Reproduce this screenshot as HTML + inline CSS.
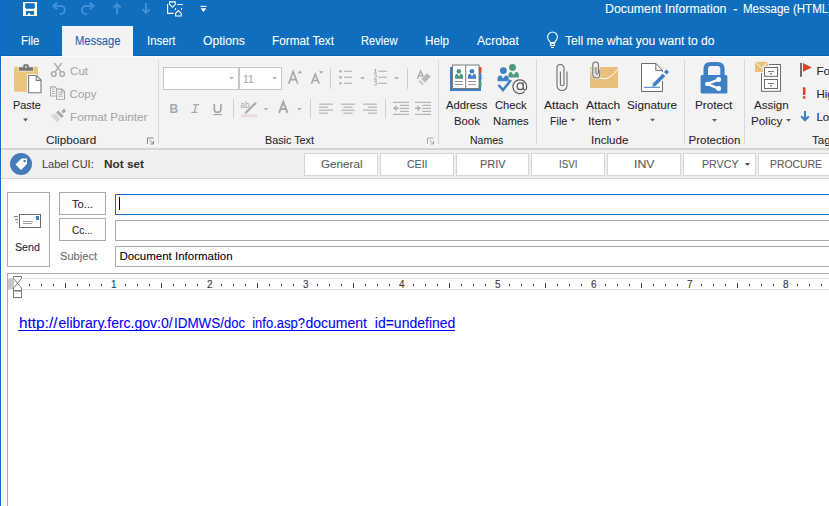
<!DOCTYPE html>
<html><head><meta charset="utf-8"><style>
html,body{margin:0;padding:0;width:829px;height:506px;overflow:hidden;background:#fff}
.t{position:absolute;font-family:"Liberation Sans",sans-serif;white-space:pre;line-height:20px;transform-origin:0 50%;-webkit-text-stroke:0.08px currentColor}
.u{text-decoration:underline}
svg{position:absolute;left:0;top:0}
</style></head><body>
<svg width="829" height="506" viewBox="0 0 829 506" shape-rendering="geometricPrecision">
<!-- title + tabs -->
<rect x="0" y="0" width="829" height="56" fill="#106ebe"/>
<rect x="0" y="55" width="829" height="1" fill="#0d62ad"/>
<rect x="62" y="26" width="71" height="30" fill="#f3f3f3"/>
<!-- ribbon -->
<rect x="1" y="56" width="828" height="92" fill="#f3f3f3"/>
<rect x="1" y="56" width="828" height="1" fill="#fbfbfb"/>
<rect x="1" y="56" width="1" height="92" fill="#fbfbfb"/>
<rect x="0" y="148" width="829" height="2" fill="#d4d4d4"/>
<!-- label bar -->
<rect x="1" y="150" width="828" height="28" fill="#f0f0f0"/>
<rect x="0" y="178" width="829" height="1" fill="#dadada"/>
<!-- left border -->
<rect x="0" y="0" width="1" height="506" fill="#0a6fcc"/>

<!-- QAT: save -->
<rect x="23" y="2" width="14" height="14" fill="#ffffff"/>
<path d="M25.2,3.2 H34.8 V7.8 L33.9,8.7 H26.1 L25.2,7.8Z" fill="#106ebe"/>
<path d="M26,11 H34 V14.8 H30.1 V13.3 H28 V14.8 H26Z" fill="#106ebe"/>
<!-- undo / redo -->
<g fill="none" stroke="#3f8fd9" stroke-width="2">
<path d="M53,5.9 H60.8 A4,4 0 0 1 60.8,13.9 H59.8"/>
<path d="M57.3,2.6 L53.2,5.9 L57.3,9.3"/>
<g transform="translate(146.8,0) scale(-1,1)">
<path d="M53,5.9 H60.8 A4,4 0 0 1 60.8,13.9 H59.8"/>
<path d="M57.3,2.6 L53.2,5.9 L57.3,9.3"/>
</g>
<path d="M117.1,4 V13.9 M113.5,7.6 L117.1,4 L120.7,7.6"/>
<path d="M146,2.9 V12.8 M142.4,9.2 L146,12.8 L149.6,9.2"/>
</g>
<!-- shape tool icon -->
<g fill="none" stroke="#ffffff" stroke-width="1.1">
<path d="M167.6,4 V13.4 H173.7"/>
<path d="M169.6,1.9 H175.3 V4.3 L172.5,7.3 L169.6,4.3Z"/>
<path d="M177.2,4.5 H182.8"/>
<path d="M175.6,16 V13.3 L178.4,10.5 L181.2,13.3 V16Z"/>
</g>
<g fill="#ffffff"><rect x="175.1" y="8" width="1" height="2"/><rect x="181" y="8" width="1" height="2"/></g>
<!-- customize -->
<rect x="200.6" y="5.8" width="5.8" height="1.2" fill="#fff"/>
<path d="M200.6,8.3 H206.4 L203.5,12 Z" fill="#fff"/>
<!-- tell me bulb -->
<g fill="none" stroke="#ffffff" stroke-width="1.1">
<path d="M550.4,42.6 L548.2,39.2 A4.9,4.9 0 1 1 556.8,39.2 L554.6,42.6 Z"/>
<rect x="550.6" y="43.3" width="3.8" height="2.2"/>
</g>
<rect x="551" y="47" width="3" height="1" fill="#ffffff"/>
<!-- group separators -->
<g fill="#d8d8d8">
<rect x="158" y="60" width="1" height="84"/>
<rect x="438" y="60" width="1" height="84"/>
<rect x="536" y="60" width="1" height="84"/>
<rect x="684" y="60" width="1" height="84"/>
<rect x="744" y="60" width="1" height="84"/>
</g>
<!-- Paste icon -->
<rect x="14" y="66.8" width="24" height="25" rx="1.5" fill="#eac57d"/>
<path d="M18.5,66.5 h15 v5 h-15z" fill="#f3f3f3" opacity="0.9"/>
<path d="M19,67.2 H23.2 V65.8 A1.5,1.5 0 0 1 24.7,64.3 H27.3 A1.5,1.5 0 0 1 28.8,65.8 V67.2 H33 V70.8 H19 Z" fill="#767676"/>
<circle cx="26" cy="67" r="0.9" fill="#f3f3f3"/>
<path d="M27,74 h10 l5.5,5.5 v15 h-15.5z" fill="#f3f3f3"/>
<path d="M28.6,75.5 H36.5 L41,80 V92.8 H28.6 Z" fill="#ffffff" stroke="#7a7a7a" stroke-width="1.1"/>
<path d="M36.2,75.5 V80.4 H41" fill="none" stroke="#7a7a7a" stroke-width="1.1"/>
<path d="M23,118.5 h5 l-2.5,3z" fill="#595959"/>
<!-- cut -->
<g fill="none" stroke="#a8a8a8" stroke-width="1.4">
<path d="M54.3,62.8 L60.6,71.6 M61.7,62.8 L55.4,71.6"/>
<circle cx="53.8" cy="73.9" r="2.3"/><circle cx="62.1" cy="73.9" r="2.3"/>
</g>
<!-- copy -->
<g fill="#fbfbfb" stroke="#a8a8a8" stroke-width="1.1">
<path d="M50.6,86.9 H55 L56.5,88.4 V96 H50.6Z"/>
<path d="M56.6,89.1 H62 L64.5,91.6 V99.2 H56.6Z"/>
</g>
<g fill="#a8a8a8">
<rect x="52" y="88.6" width="2.5" height="1"/><rect x="52" y="90.9" width="3.5" height="1"/><rect x="52" y="93" width="3.5" height="1"/>
<rect x="58.2" y="91.5" width="3" height="1"/><rect x="58.2" y="93.6" width="4.8" height="1"/><rect x="58.2" y="95.7" width="4.8" height="1"/>
<path d="M61.5,89 V92.1 H64.6" fill="none" stroke="#a8a8a8" stroke-width="1"/>
</g>
<!-- format painter -->
<path d="M61.3,111.3 L64,108.8 L66.2,110.9 L63.4,113.5Z" fill="#a8a8a8"/>
<path d="M56,112.6 L58.4,110.6 L63.9,115.9 L61.6,118Z" fill="#a8a8a8"/>
<path d="M50.1,115.3 L55.6,113.5 L60,118.6 L57.3,122.6Z" fill="#d9d5d9"/>
<!-- dialog launcher clipboard -->
<g fill="none" stroke="#8a8a8a" stroke-width="1">
<path d="M147.5,144 V138 H153.5"/>
<path d="M149.5,140 L153.5,144 M150.5,144 H153.5 V141"/>
</g>
<!-- font boxes -->
<rect x="163.5" y="67.5" width="118" height="22" fill="#ffffff" stroke="#c6c6c6" stroke-width="1"/>
<rect x="238" y="67" width="2" height="23" fill="#c6c6c6"/>
<path d="M229,77 h5 l-2.5,2.5z M272,77 h5 l-2.5,2.5z" fill="#b5b5b5"/>
<!-- grow/shrink -->
<g fill="none" stroke="#a8a8a8" stroke-width="1.6">
<path d="M288.6,83.8 L293.2,71.6 L297.8,83.8 M290.4,79.6 H296"/>
<path d="M311.4,83.8 L315.3,74.2 L319.2,83.8 M313,80.5 H317.6"/>
</g>
<g fill="#a8a8a8">
<path d="M297.6,73.2 h4.6 l-2.3,-2.6z"/>
<path d="M319,71.2 h4.6 l-2.3,2.6z"/>
</g>
<rect x="330" y="68" width="1" height="21" fill="#cfcfcf"/>
<!-- bullets -->
<g fill="#b0b0b0">
<circle cx="340.5" cy="71.3" r="1.3"/><circle cx="340.5" cy="77.3" r="1.3"/><circle cx="340.5" cy="83.3" r="1.3"/>
<rect x="344" y="70.7" width="8" height="1.1"/><rect x="344" y="76.7" width="8" height="1.1"/><rect x="344" y="82.7" width="8" height="1.1"/>
<path d="M360,77 h5 l-2.5,2.5z"/>
<rect x="378.5" y="70.7" width="8.5" height="1.1"/><rect x="378.5" y="76.7" width="8.5" height="1.1"/><rect x="378.5" y="82.7" width="8.5" height="1.1"/>
<path d="M394,77 h5 l-2.5,2.5z"/>
</g>
<g fill="none" stroke="#a8a8a8" stroke-width="0.9">
<path d="M374.2,70 L375.6,69.2 V73.2 M374,73.2 H377"/>
<path d="M374.2,75.6 Q375.6,74.4 376.8,75.4 Q377.2,76.6 374.1,79.2 H377.3"/>
<path d="M374.1,81.1 H376.9 L375.3,82.6 Q377.3,82.8 377.1,84.2 Q375.8,85.8 374,84.7"/>
</g>
<rect x="407" y="68" width="1" height="21" fill="#cfcfcf"/>
<!-- clear formatting -->
<path d="M417.4,78.8 L420.6,70.9 L423.3,76.4 M419.2,75.9 H423" fill="none" stroke="#a8a8a8" stroke-width="1.3"/>
<path d="M421.3,79 L426.7,73.3 L430.8,76.6 L424.9,82.6Z" fill="#b8b8b8"/>
<path d="M418.2,81.4 L419.7,80.1 L424,83.6 L422.3,85.2Z" fill="#c8c8c8"/>
<!-- B I U -->
<text x="169.6" y="112.8" font-family="Liberation Sans" font-size="12" font-weight="700" fill="#a8a8a8">B</text>
<g fill="none" stroke="#a8a8a8">
<path d="M193.2,104.7 H199.2 M191.3,112.3 H197.3 M196.2,104.7 L194.3,112.3" stroke-width="1.3"/>
<path d="M214.3,104 V109.3 Q214.3,112.4 217.6,112.4 Q220.9,112.4 220.9,109.3 V104" stroke-width="1.7"/>
</g>
<rect x="213.3" y="114" width="8.6" height="1.2" fill="#a8a8a8"/>
<rect x="233" y="99" width="1" height="20" fill="#cfcfcf"/>
<!-- highlight -->
<text x="240.3" y="108" font-family="Liberation Sans" font-size="8.5" fill="#a8a8a8">ab</text>
<path d="M246,112.5 L256,102.8" stroke="#a8a8a8" stroke-width="2.2"/>
<path d="M244.3,114 L245.3,111.4 L247,113.1Z" fill="#a8a8a8"/>
<rect x="241" y="114.3" width="16" height="3" fill="#e6dce6"/>
<path d="M263.5,108 h5 l-2.5,2.5z M297,108 h5 l-2.5,2.5z" fill="#b5b5b5"/>
<path d="M279,112.8 L283.3,101.9 L287.6,112.8 M280.6,108.9 H286" fill="none" stroke="#a8a8a8" stroke-width="2"/>
<rect x="310" y="99" width="1" height="20" fill="#cfcfcf"/>
<!-- align -->
<g fill="#b0b0b0">
<rect x="319" y="103.6" width="14" height="1.1"/><rect x="319" y="106.6" width="9" height="1.1"/><rect x="319" y="109.6" width="14" height="1.1"/><rect x="319" y="112.6" width="9" height="1.1"/>
<rect x="341" y="103.6" width="14" height="1.1"/><rect x="343.5" y="106.6" width="9" height="1.1"/><rect x="341" y="109.6" width="14" height="1.1"/><rect x="343.5" y="112.6" width="9" height="1.1"/>
<rect x="363" y="103.6" width="14" height="1.1"/><rect x="368" y="106.6" width="9" height="1.1"/><rect x="363" y="109.6" width="14" height="1.1"/><rect x="368" y="112.6" width="9" height="1.1"/>
</g>
<rect x="385" y="99" width="1" height="20" fill="#cfcfcf"/>
<!-- indent -->
<g fill="#b0b0b0">
<rect x="393" y="101.8" width="16" height="1.1"/><rect x="400" y="104.8" width="9" height="1.1"/><rect x="400" y="107.8" width="9" height="1.1"/><rect x="400" y="110.8" width="9" height="1.1"/><rect x="393" y="113.8" width="16" height="1.1"/>
<path d="M393,108.3 L396.5,105 V107.6 H399 V109 H396.5 V111.6Z"/>
<rect x="415" y="101.8" width="16" height="1.1"/><rect x="422" y="104.8" width="9" height="1.1"/><rect x="422" y="107.8" width="9" height="1.1"/><rect x="422" y="110.8" width="9" height="1.1"/><rect x="415" y="113.8" width="16" height="1.1"/>
<path d="M421,108.3 L417.5,105 V107.6 H415 V109 H417.5 V111.6Z"/>
</g>
<!-- basic text launcher -->
<g fill="none" stroke="#a8a8a8" stroke-width="1">
<path d="M427.5,144 V138 H433.5"/>
<path d="M429.5,140 L433.5,144 M430.5,144 H433.5 V141"/>
</g>

<!-- address book -->
<rect x="450" y="67" width="31" height="24" fill="#3f7fc4"/>
<rect x="452.5" y="65" width="26.5" height="23.5" fill="#ffffff" stroke="#7a7a7a" stroke-width="1"/>
<rect x="465.2" y="65" width="1" height="24" fill="#7a7a7a"/>
<rect x="479.5" y="67" width="2" height="6" fill="#d2522b"/>
<rect x="479.5" y="74.2" width="2" height="5.5" fill="#3f7fc4"/>
<rect x="479.5" y="81.2" width="2" height="5.5" fill="#4e9a7d"/>
<circle cx="458.8" cy="71.2" r="2.3" fill="#4e9a7d"/>
<path d="M455,78.8 V76 A2.5,2.5 0 0 1 457.5,73.8 H460 A2.5,2.5 0 0 1 463,76 V78.8Z" fill="#4e9a7d"/>
<circle cx="472" cy="71.2" r="2.3" fill="#3f7fc4"/>
<path d="M468,78.8 V76 A2.5,2.5 0 0 1 470.5,73.8 H473.5 A2.5,2.5 0 0 1 476,76 V78.8Z" fill="#3f7fc4"/>
<path d="M457.3,73.8 H460.5 L458.9,76.2Z M470.4,73.8 H473.6 L472,76.2Z" fill="#ffffff"/>
<g fill="#8a8a8a"><rect x="455" y="81" width="8" height="0.9"/><rect x="455" y="84" width="8" height="0.9"/><rect x="468" y="81" width="8" height="0.9"/><rect x="468" y="84" width="8" height="0.9"/></g>
<!-- check names -->
<circle cx="512.5" cy="67.5" r="3.4" fill="#4e9a7d"/>
<path d="M508.4,77.4 V75 A3,3 0 0 1 511.4,72 H515.9 A3,3 0 0 1 518.9,75 V77.4Z" fill="#4e9a7d"/>
<circle cx="503.4" cy="70.6" r="3.5" fill="#f3f3f3"/>
<circle cx="503.4" cy="70.6" r="3.4" fill="#3f7fc4"/>
<path d="M497.3,81.4 V78.5 A3,3 0 0 1 500.3,75.3 H506.1 A3,3 0 0 1 509.1,78.5 V81.4Z" fill="#3f7fc4" stroke="#f3f3f3" stroke-width="0.6"/>
<path d="M498.5,85 L503,90 L511,80" fill="none" stroke="#3f7fc4" stroke-width="2.6"/>
<path d="M524.6,91.6 A6.9,6.9 0 1 1 526.6,86.4 V87.6 Q526.6,89.8 524.9,89.8 Q523.2,89.8 523.2,87.6 V82.6 M523.2,86.2 A3,3.3 0 1 1 517.2,86.2 A3,3.3 0 1 1 523.2,86.2" fill="none" stroke="#5a5a5a" stroke-width="1.25"/>
<path d="M511.4,72 H515.8 L513.6,75Z M500.9,75.3 H505.5 L503.2,78.6Z" fill="#f3f3f3"/>

<!-- attach file -->
<path d="M567,71.5 V85.5 A5,5 0 0 1 557,85.5 V68 A3.5,3.5 0 0 1 564,68 V84 A1.8,1.8 0 0 1 560.4,84 V71.5" fill="none" stroke="#6d6d6d" stroke-width="1.1"/>
<!-- attach item -->
<rect x="590" y="67" width="28" height="21" fill="#e8c07b"/>
<path d="M590.5,69.5 Q604,88 617.5,69.5" fill="none" stroke="#ffffff" stroke-width="1"/>
<path d="M599.8,69.8 V74.5 A3.5,3.5 0 0 1 592.8,74.5 V64.8 A2.8,2.8 0 0 1 598.4,64.8 V73 A1.2,1.2 0 0 1 596,73 V67.5" fill="none" stroke="#f3f3f3" stroke-width="2.4"/>
<path d="M599.8,69.8 V74.5 A3.5,3.5 0 0 1 592.8,74.5 V64.8 A2.8,2.8 0 0 1 598.4,64.8 V73 A1.2,1.2 0 0 1 596,73 V67.5" fill="none" stroke="#6d6d6d" stroke-width="1.1"/>
<!-- signature -->
<path d="M641.5,63.5 H655.8 L662.5,70.2 V91.5 H641.5Z" fill="#ffffff" stroke="#6d6d6d" stroke-width="1"/>
<path d="M655.8,63.5 V70.4 H662.5" fill="none" stroke="#6d6d6d" stroke-width="1"/>
<path d="M652.5,86.5 L665.5,73.5" stroke="#f3f3f3" stroke-width="6.5"/>
<path d="M654,85 L664,75" stroke="#3f7fc4" stroke-width="3.6"/>
<path d="M665.3,73.2 L667.7,70.8" stroke="#3f7fc4" stroke-width="3.6"/>
<path d="M652,87 L653.5,83.5 L655.5,85.5Z" fill="#3f7fc4"/>
<rect x="644" y="86.8" width="16" height="1" fill="#3f7fc4"/>
<!-- dropdown arrows for include -->
<path d="M570.5,118.8 h5 l-2.5,2.8z M615.3,118.8 h5 l-2.5,2.8z M650,118.8 h5 l-2.5,2.8z M712,119 h5 l-2.5,2.8z M786,119 h5 l-2.5,2.8z" fill="#595959"/>
<!-- lock -->
<path d="M703.5,75 V69 Q703.5,62 710.5,62 H717.5 Q724.6,62 724.6,69 V75 H720.3 V68.6 Q720.3,65.9 717.6,65.9 H710.7 Q708,65.9 708,68.6 V75Z" fill="#3f7fc4"/>
<rect x="700.6" y="74.9" width="26.8" height="18.7" rx="1.5" fill="#3f7fc4"/>
<g stroke="#ffffff" stroke-width="2.4" fill="#ffffff">
<path d="M707.4,83.9 L718.6,79.6 M707.4,83.9 L718.6,88.6"/>
<circle cx="707.3" cy="83.9" r="2.2" stroke="none"/>
<circle cx="718.6" cy="79.6" r="2.5" stroke="none"/>
<circle cx="718.6" cy="88.6" r="2.5" stroke="none"/>
</g>
<!-- cabinet -->
<rect x="761.5" y="64.5" width="19" height="26.8" fill="#ffffff" stroke="#6d6d6d" stroke-width="1"/>
<rect x="754" y="61" width="15" height="12" fill="#f3f3f3"/>
<rect x="755" y="61.8" width="13" height="10.2" fill="#e8c07b"/>
<path d="M755.3,62.3 L761.5,68.3 L767.7,62.3" fill="none" stroke="#ffffff" stroke-width="0.9"/>
<rect x="763.5" y="66.5" width="15" height="10.8" fill="none" stroke="#f3f3f3" stroke-width="1"/>
<rect x="764.5" y="67.5" width="13" height="8.8" fill="#ffffff" stroke="#6d6d6d" stroke-width="1"/>
<rect x="764.5" y="79.5" width="13" height="9" fill="none" stroke="#6d6d6d" stroke-width="1"/>
<g fill="#6d6d6d"><rect x="768" y="71" width="6" height="0.9"/><rect x="770.3" y="73" width="1.5" height="1.5"/><rect x="768" y="83" width="6" height="0.9"/><rect x="770.3" y="85" width="1.5" height="1.5"/></g>
<!-- tags -->
<rect x="800" y="63" width="2" height="13.8" fill="#6d6d6d"/>
<path d="M803,63.1 L811.8,67.4 L803,71.7Z" fill="#d24726"/>
<rect x="802.9" y="87.3" width="2.6" height="7.6" fill="#d24726"/>
<rect x="802.9" y="96.2" width="2.6" height="2.5" fill="#d24726"/>
<path d="M805,111 V120 M801.2,116.2 L805,120.2 L808.8,116.2" fill="none" stroke="#3f7fc4" stroke-width="2"/>

<!-- label bar -->
<circle cx="21" cy="164" r="11" fill="#467bb9"/>
<path d="M15.5,164.5 L21.5,158.5 H27 V164 L21,170Z" fill="#ffffff" transform="rotate(0)"/>
<circle cx="24.6" cy="161" r="1.2" fill="#467bb9"/>
<g fill="#ffffff" stroke="#d6d6d6" stroke-width="1">
<rect x="304.5" y="153.5" width="73" height="22"/>
<rect x="380.5" y="153.5" width="73" height="22"/>
<rect x="456.5" y="153.5" width="72" height="22"/>
<rect x="531.5" y="153.5" width="73" height="22"/>
<rect x="607.5" y="153.5" width="73" height="22"/>
<rect x="683.5" y="153.5" width="72" height="22"/>
<rect x="758.5" y="153.5" width="73" height="22"/>
</g>
<path d="M745,163 h5 l-2.5,2.8z" fill="#444"/>

<!-- compose -->
<rect x="7.5" y="192.5" width="42" height="74" fill="#fdfdfd" stroke="#ababab" stroke-width="1"/>
<rect x="59.5" y="192.5" width="46" height="22" fill="#fdfdfd" stroke="#ababab" stroke-width="1"/>
<rect x="59.5" y="218.5" width="46" height="22" fill="#fdfdfd" stroke="#ababab" stroke-width="1"/>
<rect x="115" y="194" width="720" height="21" fill="#0a6fcc"/>
<rect x="116" y="195" width="720" height="19" fill="#ffffff"/>
<rect x="115.5" y="220.5" width="720" height="20" fill="#ffffff" stroke="#ababab" stroke-width="1"/>
<rect x="115.5" y="246.5" width="720" height="20" fill="#ffffff" stroke="#ababab" stroke-width="1"/>
<rect x="119" y="197" width="1" height="13" fill="#000"/>
<!-- send icon -->
<rect x="19.5" y="214.5" width="21" height="13" fill="#fff" stroke="#6d6d6d" stroke-width="1"/>
<rect x="36" y="216" width="3" height="4" fill="#3f7fc4"/>
<rect x="23" y="221" width="10" height="0.8" fill="#8a8a8a"/>
<rect x="23" y="223.2" width="9" height="0.8" fill="#8a8a8a"/>
<rect x="14" y="216.2" width="4" height="1" fill="#6d6d6d"/>
<rect x="15" y="219.2" width="3" height="1" fill="#6d6d6d"/>
<rect x="16.5" y="222.2" width="1.5" height="1" fill="#6d6d6d"/>

<!-- ruler / body frame -->
<rect x="7" y="273" width="822" height="1" fill="#ababab"/>
<rect x="7" y="273" width="1" height="233" fill="#ababab"/>
<rect x="8" y="278" width="821" height="1" fill="#e1e1e1"/>
<rect x="8" y="289" width="821" height="1" fill="#e1e1e1"/>
<rect x="8" y="279" width="6" height="10" fill="#c6c6c6"/>
<g fill="#3a3a3a"><rect x="29" y="284" width="1" height="2"/><rect x="41" y="284" width="1" height="2"/><rect x="53" y="284" width="1" height="2"/><rect x="65" y="283" width="1" height="5"/><rect x="77" y="284" width="1" height="2"/><rect x="89" y="284" width="1" height="2"/><rect x="101" y="284" width="1" height="2"/><rect x="125" y="284" width="1" height="2"/><rect x="137" y="284" width="1" height="2"/><rect x="149" y="284" width="1" height="2"/><rect x="161" y="283" width="1" height="5"/><rect x="173" y="284" width="1" height="2"/><rect x="185" y="284" width="1" height="2"/><rect x="197" y="284" width="1" height="2"/><rect x="221" y="284" width="1" height="2"/><rect x="233" y="284" width="1" height="2"/><rect x="245" y="284" width="1" height="2"/><rect x="257" y="283" width="1" height="5"/><rect x="269" y="284" width="1" height="2"/><rect x="281" y="284" width="1" height="2"/><rect x="293" y="284" width="1" height="2"/><rect x="317" y="284" width="1" height="2"/><rect x="329" y="284" width="1" height="2"/><rect x="341" y="284" width="1" height="2"/><rect x="353" y="283" width="1" height="5"/><rect x="365" y="284" width="1" height="2"/><rect x="377" y="284" width="1" height="2"/><rect x="389" y="284" width="1" height="2"/><rect x="413" y="284" width="1" height="2"/><rect x="425" y="284" width="1" height="2"/><rect x="437" y="284" width="1" height="2"/><rect x="449" y="283" width="1" height="5"/><rect x="461" y="284" width="1" height="2"/><rect x="473" y="284" width="1" height="2"/><rect x="485" y="284" width="1" height="2"/><rect x="509" y="284" width="1" height="2"/><rect x="521" y="284" width="1" height="2"/><rect x="533" y="284" width="1" height="2"/><rect x="545" y="283" width="1" height="5"/><rect x="557" y="284" width="1" height="2"/><rect x="569" y="284" width="1" height="2"/><rect x="581" y="284" width="1" height="2"/><rect x="605" y="284" width="1" height="2"/><rect x="617" y="284" width="1" height="2"/><rect x="629" y="284" width="1" height="2"/><rect x="641" y="283" width="1" height="5"/><rect x="653" y="284" width="1" height="2"/><rect x="665" y="284" width="1" height="2"/><rect x="677" y="284" width="1" height="2"/><rect x="701" y="284" width="1" height="2"/><rect x="713" y="284" width="1" height="2"/><rect x="725" y="284" width="1" height="2"/><rect x="737" y="283" width="1" height="5"/><rect x="749" y="284" width="1" height="2"/><rect x="761" y="284" width="1" height="2"/><rect x="773" y="284" width="1" height="2"/><rect x="797" y="284" width="1" height="2"/><rect x="809" y="284" width="1" height="2"/><rect x="821" y="284" width="1" height="2"/></g>

<g fill="#ffffff" stroke="#7a7a7a" stroke-width="1">
<path d="M13.5,276.5 H21.5 V278.5 L17.5,283.3 L13.5,278.5 Z"/>
<path d="M17.5,283.3 L21.5,288 V290.5 H13.5 V288 Z"/>
<rect x="13.5" y="291" width="8" height="6.5"/>
</g>
<rect x="18" y="330" width="437" height="1" fill="#0000ff"/>
</svg>

<div class="t" style="left:604.60px;top:-1.33px;font-size:12.5px;color:#ffffff;transform:scaleX(0.9879);">Document Information</div>
<div class="t" style="left:732.50px;top:-1.33px;font-size:12.5px;color:#ffffff;transform:scaleX(1.0787);">-</div>
<div class="t" style="left:743.30px;top:-1.33px;font-size:12.5px;color:#ffffff;transform:scaleX(0.9218);">Message (HTML)</div>
<div class="t" style="left:21.00px;top:30.67px;font-size:12.5px;color:#ffffff;transform:scaleX(0.9178);">File</div>
<div class="t" style="left:74.50px;top:30.67px;font-size:12.5px;color:#1c5fae;transform:scaleX(0.8968);">Message</div>
<div class="t" style="left:147.20px;top:30.67px;font-size:12.5px;color:#ffffff;transform:scaleX(0.9115);">Insert</div>
<div class="t" style="left:203.20px;top:30.67px;font-size:12.5px;color:#ffffff;transform:scaleX(0.9700);">Options</div>
<div class="t" style="left:272.20px;top:30.67px;font-size:12.5px;color:#ffffff;transform:scaleX(0.9427);">Format Text</div>
<div class="t" style="left:361.30px;top:30.67px;font-size:12.5px;color:#ffffff;transform:scaleX(0.8902);">Review</div>
<div class="t" style="left:425.30px;top:30.67px;font-size:12.5px;color:#ffffff;transform:scaleX(0.9371);">Help</div>
<div class="t" style="left:477.10px;top:30.67px;font-size:12.5px;color:#ffffff;transform:scaleX(0.9700);">Acrobat</div>
<div class="t" style="left:564.80px;top:30.67px;font-size:12.5px;color:#ffffff;transform:scaleX(0.9699);">Tell me what you want to do</div>
<div class="t" style="left:12.80px;top:95.02px;font-size:11.5px;color:#262626;transform:scaleX(0.9415);">Paste</div>
<div class="t" style="left:69.60px;top:60.92px;font-size:11.5px;color:#a6a6a6;transform:scaleX(1.0108);">Cut</div>
<div class="t" style="left:69.60px;top:84.02px;font-size:11.5px;color:#a6a6a6;">Copy</div>
<div class="t" style="left:69.60px;top:107.02px;font-size:11.5px;color:#a6a6a6;transform:scaleX(1.0176);">Format Painter</div>
<div class="t" style="left:46.40px;top:130.02px;font-size:11.5px;color:#262626;transform:scaleX(1.0196);">Clipboard</div>
<div class="t" style="left:242.90px;top:69.02px;font-size:11.5px;color:#a6a6a6;transform:scaleX(0.9119);">11</div>
<div class="t" style="left:265.00px;top:130.02px;font-size:11.5px;color:#262626;transform:scaleX(0.9386);">Basic Text</div>
<div class="t" style="left:445.50px;top:95.02px;font-size:11.5px;color:#262626;transform:scaleX(0.9790);">Address</div>
<div class="t" style="left:453.70px;top:111.02px;font-size:11.5px;color:#262626;transform:scaleX(0.9840);">Book</div>
<div class="t" style="left:495.00px;top:95.02px;font-size:11.5px;color:#262626;transform:scaleX(0.9721);">Check</div>
<div class="t" style="left:492.80px;top:111.02px;font-size:11.5px;color:#262626;transform:scaleX(0.9798);">Names</div>
<div class="t" style="left:470.40px;top:130.02px;font-size:11.5px;color:#262626;transform:scaleX(0.9139);">Names</div>
<div class="t" style="left:544.00px;top:95.02px;font-size:11.5px;color:#262626;transform:scaleX(1.0549);">Attach</div>
<div class="t" style="left:549.60px;top:111.02px;font-size:11.5px;color:#262626;transform:scaleX(0.9282);">File</div>
<div class="t" style="left:586.40px;top:95.02px;font-size:11.5px;color:#262626;transform:scaleX(1.0488);">Attach</div>
<div class="t" style="left:588.30px;top:111.02px;font-size:11.5px;color:#262626;transform:scaleX(1.0458);">Item</div>
<div class="t" style="left:627.00px;top:95.02px;font-size:11.5px;color:#262626;transform:scaleX(1.0176);">Signature</div>
<div class="t" style="left:591.10px;top:130.02px;font-size:11.5px;color:#262626;transform:scaleX(1.0083);">Include</div>
<div class="t" style="left:695.40px;top:95.02px;font-size:11.5px;color:#262626;transform:scaleX(1.0237);">Protect</div>
<div class="t" style="left:688.50px;top:130.02px;font-size:11.5px;color:#262626;">Protection</div>
<div class="t" style="left:754.10px;top:95.02px;font-size:11.5px;color:#262626;">Assign</div>
<div class="t" style="left:751.40px;top:111.02px;font-size:11.5px;color:#262626;transform:scaleX(1.0200);">Policy</div>
<div class="t" style="left:816.40px;top:61.02px;font-size:11.5px;color:#262626;">Follow Up</div>
<div class="t" style="left:816.40px;top:84.02px;font-size:11.5px;color:#262626;">High Importance</div>
<div class="t" style="left:816.40px;top:107.02px;font-size:11.5px;color:#262626;">Low Importance</div>
<div class="t" style="left:812.10px;top:130.02px;font-size:11.5px;color:#262626;">Tags</div>
<div class="t" style="left:41.80px;top:153.92px;font-size:11.5px;color:#444444;transform:scaleX(0.9514);">Label CUI:</div>
<div class="t" style="left:103.70px;top:153.92px;font-size:11.5px;color:#333333;font-weight:700;transform:scaleX(1.0261);">Not set</div>
<div class="t" style="left:320.55px;top:154.02px;font-size:11.5px;color:#595959;transform:scaleX(1.0141);">General</div>
<div class="t" style="left:407.15px;top:154.02px;font-size:11.5px;color:#595959;transform:scaleX(0.9162);">CEII</div>
<div class="t" style="left:480.35px;top:154.02px;font-size:11.5px;color:#595959;transform:scaleX(0.9499);">PRIV</div>
<div class="t" style="left:559.25px;top:154.02px;font-size:11.5px;color:#595959;transform:scaleX(0.8512);">ISVI</div>
<div class="t" style="left:633.85px;top:154.02px;font-size:11.5px;color:#595959;transform:scaleX(1.0693);">INV</div>
<div class="t" style="left:701.75px;top:154.02px;font-size:11.5px;color:#595959;transform:scaleX(0.9259);">PRVCY</div>
<div class="t" style="left:770.00px;top:154.02px;font-size:11.5px;color:#595959;transform:scaleX(0.9041);">PROCURE</div>
<div class="t" style="left:71.80px;top:194.02px;font-size:11.5px;color:#262626;transform:scaleX(0.9708);">To...</div>
<div class="t" style="left:72.40px;top:220.02px;font-size:11.5px;color:#262626;transform:scaleX(0.8672);">Cc...</div>
<div class="t" style="left:59.60px;top:245.82px;font-size:11.5px;color:#6b6b6b;transform:scaleX(0.9672);">Subject</div>
<div class="t" style="left:15.40px;top:236.92px;font-size:11.5px;color:#262626;transform:scaleX(0.9271);">Send</div>
<div class="t" style="left:119.40px;top:245.82px;font-size:11.5px;color:#000000;">Document Information</div>
<div class="t" style="left:18.50px;top:313.15px;font-size:14px;color:#0000ff;transform:scaleX(1.0990);">http://</div>
<div class="t" style="left:58.50px;top:313.15px;font-size:14px;color:#0000ff;">elibrary.ferc.gov:0/</div>
<div class="t" style="left:173.50px;top:313.15px;font-size:14px;color:#0000ff;transform:scaleX(0.9595);">IDMWS/</div>
<div class="t" style="left:224.00px;top:313.15px;font-size:14px;color:#0000ff;transform:scaleX(0.9290);">doc_info.asp?</div>
<div class="t" style="left:305.50px;top:313.15px;font-size:14px;color:#0000ff;">document_id=undefined</div>
<div class="t" style="left:110.92px;top:274.54px;font-size:10px;color:#333333;">1</div>
<div class="t" style="left:206.92px;top:274.54px;font-size:10px;color:#333333;">2</div>
<div class="t" style="left:302.92px;top:274.54px;font-size:10px;color:#333333;">3</div>
<div class="t" style="left:398.92px;top:274.54px;font-size:10px;color:#333333;">4</div>
<div class="t" style="left:494.92px;top:274.54px;font-size:10px;color:#333333;">5</div>
<div class="t" style="left:590.92px;top:274.54px;font-size:10px;color:#333333;">6</div>
<div class="t" style="left:686.92px;top:274.54px;font-size:10px;color:#333333;">7</div>
<div class="t" style="left:782.92px;top:274.54px;font-size:10px;color:#333333;">8</div>
</body></html>
